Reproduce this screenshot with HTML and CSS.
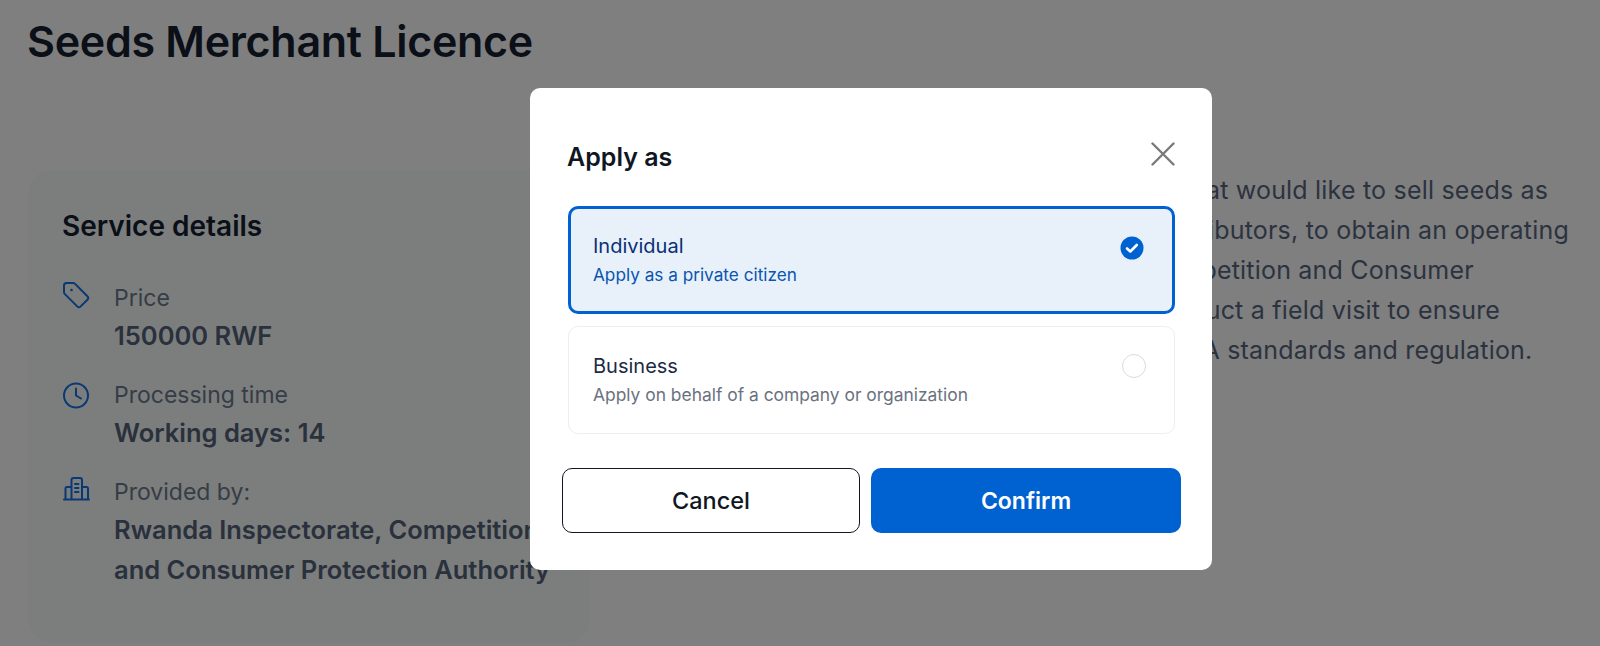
FILE: index.html
```html
<!DOCTYPE html>
<html lang="en">
<head>
  <meta charset="UTF-8" />
  <meta name="viewport" content="width=device-width, initial-scale=1.0"/>
  <title>Seeds Merchant Licence</title>
  <link rel="stylesheet" href="styles.css">
</head>
<body>
  <div class="page">
    <h1>Seeds Merchant Licence</h1>

    <div class="columns">
      <div class="card">
        <h2>Service details</h2>

        <div class="detail">
          <svg class="icon" viewBox="0 0 28 32" width="28" height="32">
            <path d="M4.5 2H11a3 3 0 0 1 2.1.9L25.4 15.2a2.5 2.5 0 0 1 0 3.5L18.7 25.4a2.5 2.5 0 0 1-3.5 0L2.9 13.1A3 3 0 0 1 2 11V4.5A2.5 2.5 0 0 1 4.5 2Z"/>
            <circle class="dot" cx="9.5" cy="9" r="1.3"/>
          </svg>
          <div>
            <div class="label">Price</div>
            <div class="value">150000 RWF</div>
          </div>
        </div>

        <div class="detail">
          <svg class="icon" viewBox="0 0 28 32" width="28" height="32">
            <circle cx="14" cy="17.5" r="12"/>
            <path d="M14 10.5v7l5 3"/>
          </svg>
          <div>
            <div class="label">Processing time</div>
            <div class="value">Working days: 14</div>
          </div>
        </div>

        <div class="detail">
          <svg class="icon" viewBox="0 0 28 32" width="28" height="32">
            <path d="M2 24.5h25M9.5 24.5V5a2 2 0 0 1 2-2h6.500a2 2 0 0 1 2 2v19.500M9.500 12H5a1.500 1.500 0 0 0-1.500 1.500v11M20 12h4.500a1.500 1.500 0 0 1 1.500 1.500v11M13 9h3.500M13 13h3.500M13 17h3.500"/>
          </svg>
          <div>
            <div class="label">Provided by:</div>
            <div class="value">Rwanda Inspectorate, Competition<br>and Consumer Protection Authority</div>
          </div>
        </div>
      </div>

      <p class="about">
        This licence is for individuals and farmers that would like to sell seeds as<br>
        either retailers, wholesalers, or as seed distributors, to obtain an operating<br>
        licence from the Rwanda Inspectorate, Competition and Consumer<br>
        Protection Authority. Its inspectors will conduct a field visit to ensure<br>
        that the premises and shops conform to RICA standards and regulation.
      </p>
    </div>
  </div>

  <!-- Apply dialog -->
  <div class="overlay">
    <div class="modal">
      <div class="modal-head">
        <h3>Apply as</h3>
        <svg class="close" viewBox="0 0 24 24" width="24" height="24">
          <path d="M1.500 1.500l21 21M22.500 1.500l-21 21"/>
        </svg>
      </div>

      <div class="option selected">
        <div>
          <div class="option-title">Individual</div>
          <div class="option-sub">Apply as a private citizen</div>
        </div>
        <svg class="check" viewBox="0 0 24 24" width="24" height="24">
          <circle cx="12" cy="12" r="11.500"/>
          <path d="M7 12.500l3.300 3 6.500-6.500"/>
        </svg>
      </div>

      <div class="option">
        <div>
          <div class="option-title">Business</div>
          <div class="option-sub">Apply on behalf of a company or organization</div>
        </div>
        <span class="radio"></span>
      </div>

      <div class="actions">
        <button class="btn cancel">Cancel</button>
        <button class="btn confirm">Confirm</button>
      </div>
    </div>
  </div>
</body>
</html>
```

FILE: styles.css
```css
* {
  box-sizing: border-box;
}

body {
  font-family: Inter, "Noto Sans", sans-serif;
  background: #fff;
  margin: 0;
  height: 646px;
  overflow: hidden;
}

.page {
  padding: 0 0 0 28px;
}

h1 {
  margin: 0 0 0 -1px;
  padding-top: 15px;
  font-size: 43px;
  line-height: 52px;
  font-weight: 600;
  letter-spacing: -0.3px;
  color: #141e30;
}

.columns {
  display: flex;
  margin-top: 103px;
}

.card {
  width: 562px;
  height: 473px;
  flex-shrink: 0;
  padding: 38px 0 0 34px;
  background: #f8fcfa;
  border-radius: 24px;
}

.card h2 {
  margin: 0 0 37px;
  font-size: 28px;
  line-height: 36px;
  font-weight: 600;
  color: #141e30;
}

.detail {
  display: flex;
  gap: 24px;
  margin-bottom: 22px;
}

.icon {
  flex-shrink: 0;
  fill: none;
  stroke: #1470e8;
  stroke-width: 2;
  stroke-linecap: round;
  stroke-linejoin: round;
}

.icon .dot {
  fill: #1470e8;
  stroke: none;
}

.label {
  font-size: 23px;
  line-height: 35px;
  color: #6a7a8e;
}

.value {
  font-size: 25.500px;
  line-height: 40px;
  font-weight: 600;
  white-space: nowrap;
  color: #546279;
}

.about {
  margin: 0 0 0 86px;
  font-size: 25px;
  line-height: 40px;
  letter-spacing: 0.2px;
  white-space: nowrap;
  color: #586680;
}

.overlay {
  position: fixed;
  top: 0;
  left: 0;
  width: 100%;
  height: 100%;
  background: rgba(0,0,0,0.5);
  padding: 88px 0 0 530px;
}

.modal {
  width: 682px;
  height: 482px;
  background: #fff;
  border-radius: 10px;
  padding: 54px 37px 0 38px;
}

.modal-head {
  display: flex;
  align-items: flex-start;
  justify-content: space-between;
  height: 64px;
}

.modal-head h3 {
  margin: -1px 0 0 -1px;
  font-size: 25px;
  line-height: 32px;
  font-weight: 600;
  color: #101722;
}

.close {
  fill: none;
  stroke: #7a7a7a;
  stroke-width: 2.400;
  stroke-linecap: round;
}

.option {
  display: flex;
  align-items: flex-start;
  justify-content: space-between;
  height: 108px;
  margin-bottom: 12px;
  padding: 25px 28px 0 24px;
  border: 1px solid #eceef3;
  border-radius: 10px;
}

.option.selected {
  background: #e8f1fa;
  border: 3px solid #0062d1;
  padding: 23px 28px 0 22px;
}

.option-title {
  font-size: 20px;
  line-height: 29px;
  color: #1d2b45;
}

.option-sub {
  font-size: 17.400px;
  line-height: 28px;
  color: #6a7280;
}

.selected .option-title {
  color: #0a3075;
}

.selected .option-sub {
  font-size: 17.200px;
  color: #0a55b0;
}

.check {
  margin-top: 4px;
}

.check circle {
  fill: #0062d1;
}

.check path {
  fill: none;
  stroke: #fff;
  stroke-width: 2.600;
  stroke-linecap: round;
  stroke-linejoin: round;
}

.radio {
  width: 24px;
  height: 24px;
  margin-top: 2px;
  border: 1.500px solid #d8dbe3;
  border-radius: 50%;
}

.actions {
  display: flex;
  gap: 11px;
  margin: 34px -6px 0;
}

.btn {
  height: 65px;
  font-family: inherit;
  font-size: 23px;
  font-weight: 600;
  border-radius: 10px;
}

.cancel {
  width: 298px;
  font-size: 23.500px;
  font-weight: 500;
  background: #fff;
  color: #101722;
  border: 1px solid #101722;
}

.confirm {
  width: 310px;
  background: #0062d1;
  color: #fff;
  border: none;
}
```
